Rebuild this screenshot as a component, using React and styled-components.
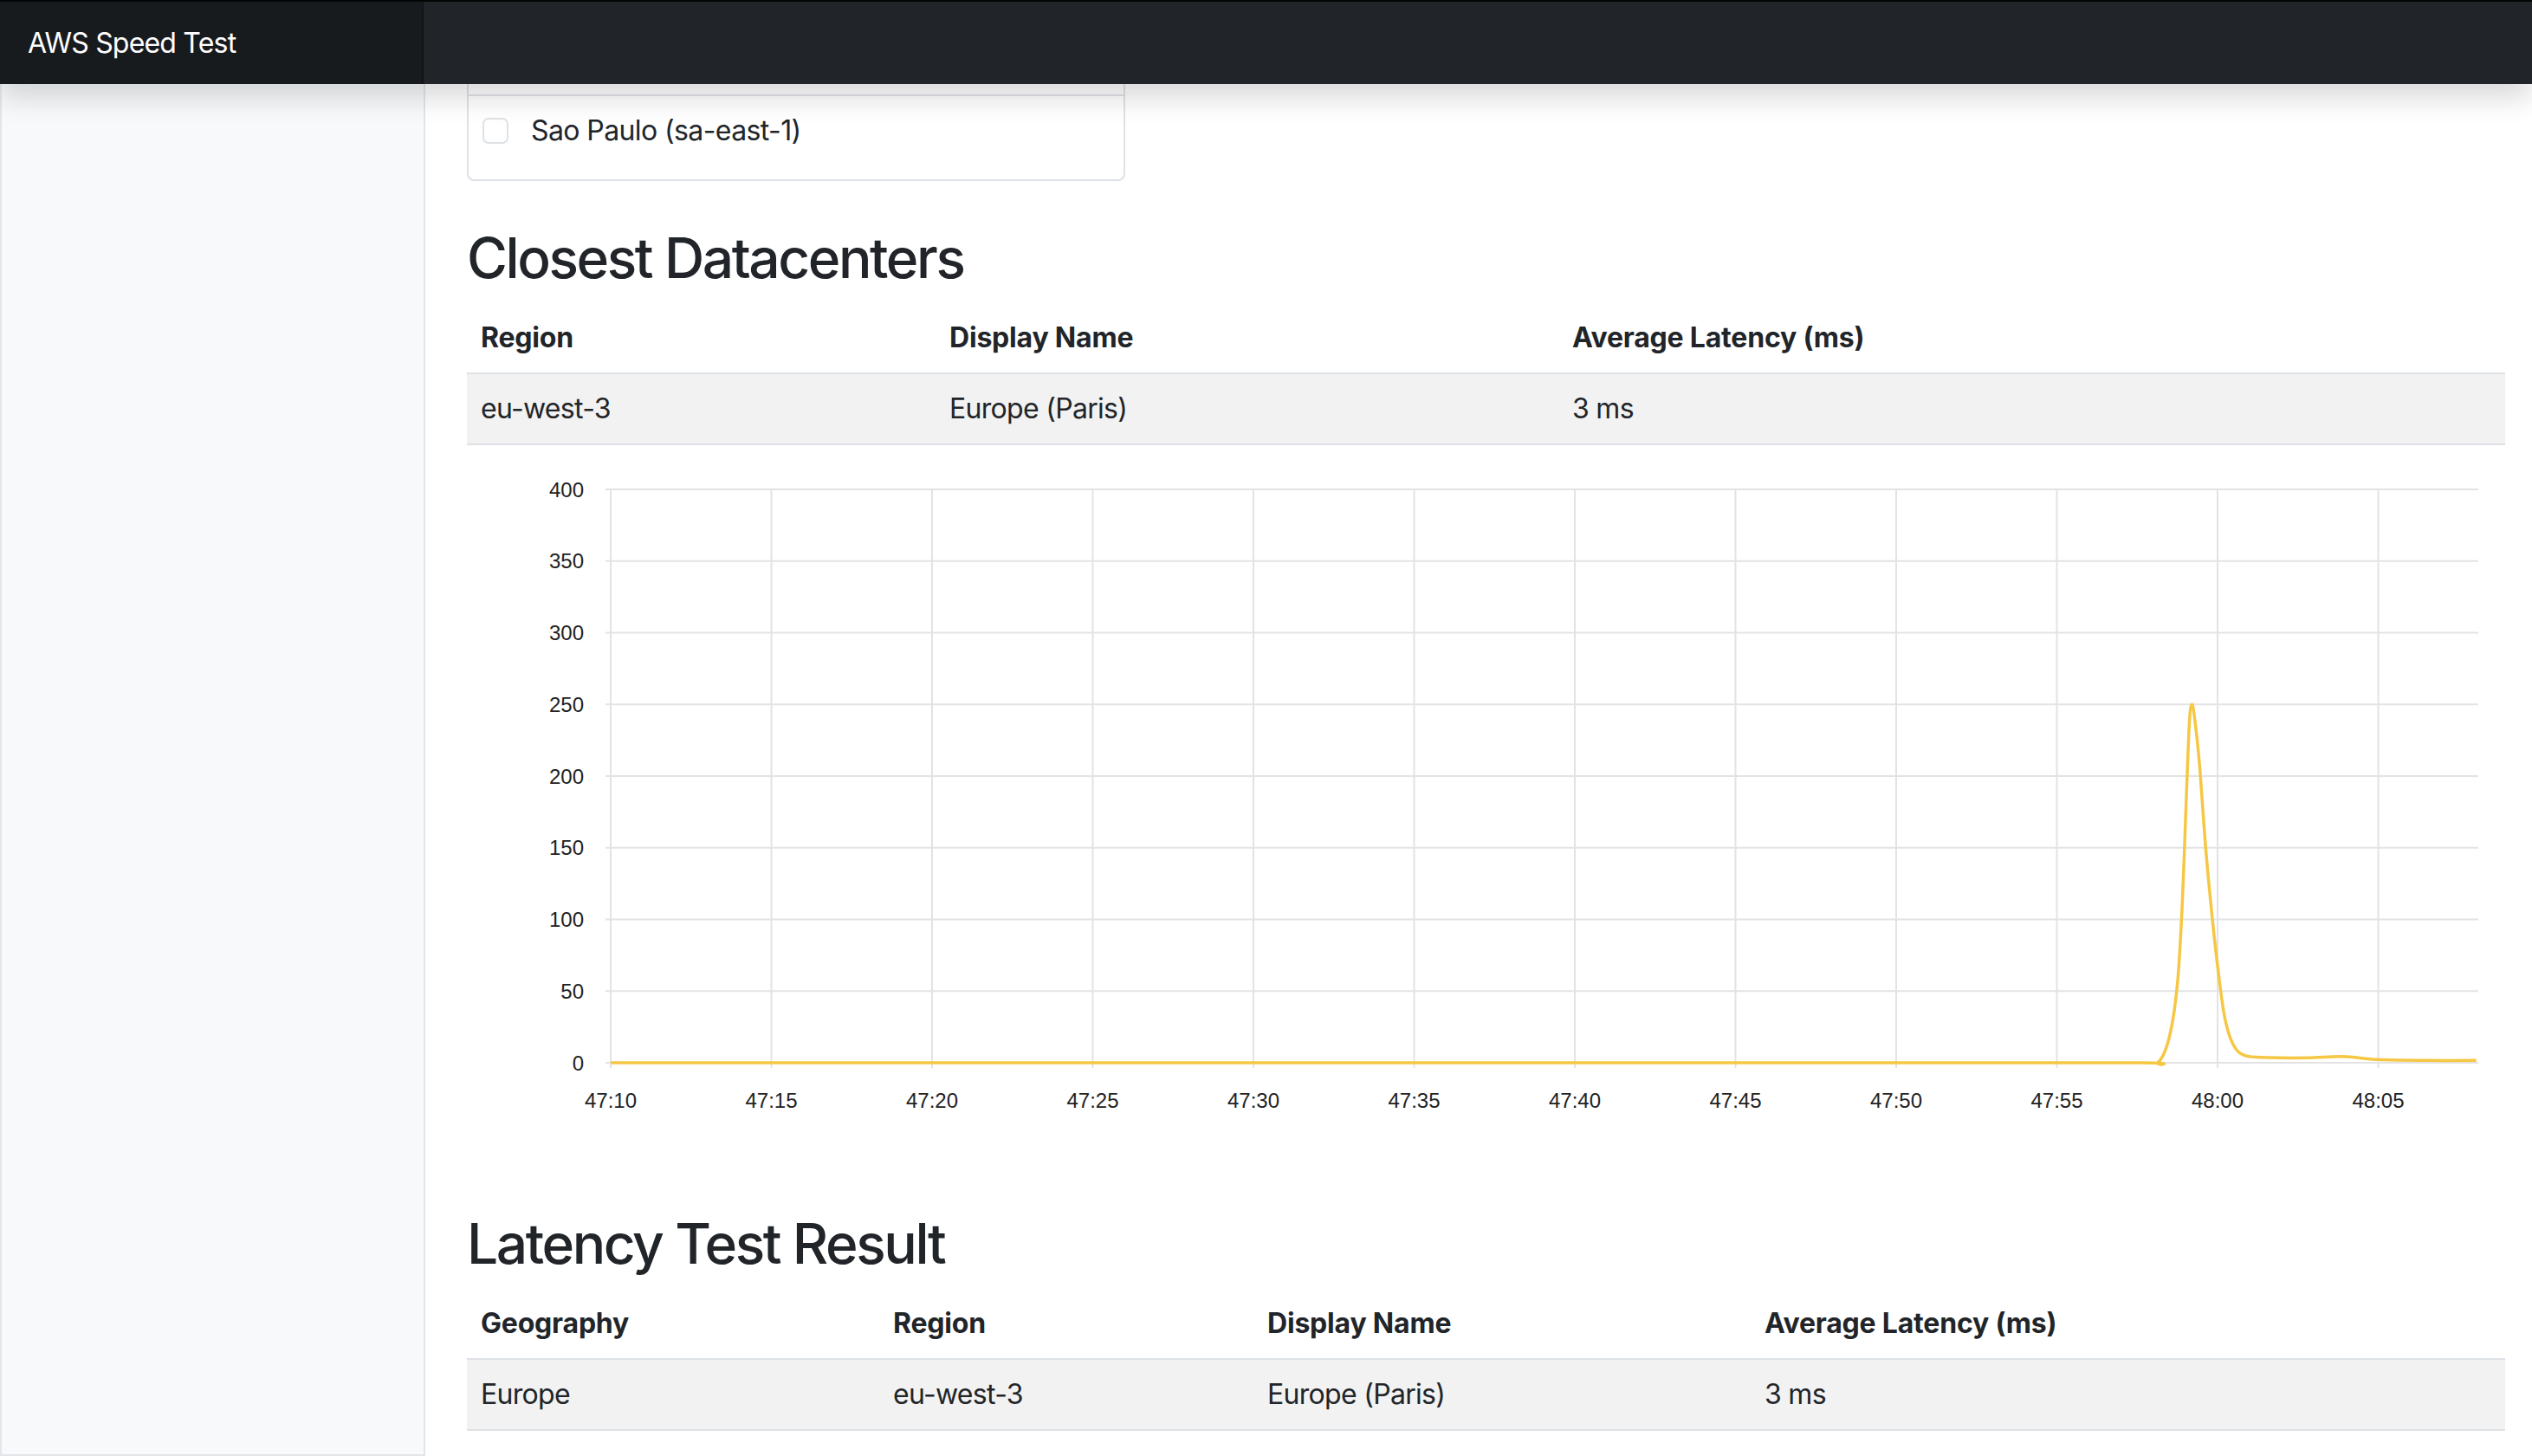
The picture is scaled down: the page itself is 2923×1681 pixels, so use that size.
import React from "react";
import styled, { createGlobalStyle } from "styled-components";

// page is drawn at 2x of the usual bootstrap dashboard sizes
const GlobalStyle = createGlobalStyle`
  * { box-sizing: border-box; }
  body {
    margin: 0;
    font-family: Inter, "Noto Sans", "Liberation Sans", sans-serif;
    color: #212529;
    background: #fff;
  }
`;

const regions = [
  { geography: "Europe", region: "eu-west-3", name: "Europe (Paris)", latency: "3 ms" },
];

// latency samples: seconds since 47:10 and ms
const samples = [
  [0, 0], [20, 0], [40, 0], [47.6, 0], [48.15, 0.3], [48.5, 18], [48.75, 55],
  [48.9, 110], [49.02, 180], [49.12, 236], [49.2, 250], [49.3, 238],
  [49.45, 205], [49.63, 150], [49.84, 100], [50.02, 64], [50.22, 32],
  [50.48, 13], [50.85, 5], [51.6, 3.6], [52.8, 3.4], [53.9, 4.4],
  [55.0, 2.2], [56.5, 1.6], [58.05, 1.6],
];

const PLOT_LEFT = 166;
const PLOT_RIGHT = 2322;
const PLOT_TOP = 21;
const PLOT_BOTTOM = 683;
const X_STEP = 185.5;

const px = (t) => PLOT_LEFT + (t / 5) * X_STEP;
const py = (v) => PLOT_BOTTOM - (v / 400) * (PLOT_BOTTOM - PLOT_TOP);

const smoothPath = (pts) => {
  const p = pts.map(([t, v]) => [px(t), py(v)]);
  let d = `M${p[0][0]},${p[0][1]}`;
  for (let i = 0; i < p.length - 1; i++) {
    const p0 = p[i - 1] || p[i];
    const p1 = p[i];
    const p2 = p[i + 1];
    const p3 = p[i + 2] || p2;
    const c1x = p1[0] + (p2[0] - p0[0]) / 6;
    const c1y = p1[1] + (p2[1] - p0[1]) / 6;
    const c2x = p2[0] - (p3[0] - p1[0]) / 6;
    const c2y = p2[1] - (p3[1] - p1[1]) / 6;
    d += ` C${c1x},${c1y} ${c2x},${c2y} ${p2[0]},${p2[1]}`;
  }
  return d;
};

const xLabels = ["47:10", "47:15", "47:20", "47:25", "47:30", "47:35", "47:40", "47:45", "47:50", "47:55", "48:00", "48:05"];
const yLabels = [400, 350, 300, 250, 200, 150, 100, 50, 0];

const App = () => {
  return (
    <>
      <GlobalStyle />
      <Navbar>
        <Brand>AWS Speed Test</Brand>
      </Navbar>
      <Layout>
        <Sidebar />
        <Main>
          <RegionList>
            <RegionItem>
              <Check type="checkbox" />
              <span>Stockholm (eu-north-1)</span>
            </RegionItem>
            <RegionItem>
              <Check type="checkbox" />
              <span>Sao Paulo (sa-east-1)</span>
            </RegionItem>
          </RegionList>

          <Heading $mt="51px">Closest Datacenters</Heading>
          <Table>
            <colgroup>
              <col style={{ width: 541 }} />
              <col style={{ width: 719 }} />
              <col />
            </colgroup>
            <thead>
              <tr>
                <Th>Region</Th>
                <Th>Display Name</Th>
                <Th>Average Latency (ms)</Th>
              </tr>
            </thead>
            <tbody>
              {regions.map((r) => (
                <Row key={r.region}>
                  <Td>{r.region}</Td>
                  <Td>{r.name}</Td>
                  <Td>{r.latency}</Td>
                </Row>
              ))}
            </tbody>
          </Table>

          <ChartBox>
            <svg width="2352" height="760" viewBox="0 0 2352 760">
              {yLabels.map((v) => (
                <g key={v}>
                  <line x1={PLOT_LEFT - 6} x2={PLOT_RIGHT} y1={py(v)} y2={py(v)} stroke="#e3e3e3" strokeWidth="2" />
                  <AxisText x={PLOT_LEFT - 31} y={py(v)} textAnchor="end" dominantBaseline="central">
                    {v}
                  </AxisText>
                </g>
              ))}
              {xLabels.map((l, i) => (
                <g key={l}>
                  <line x1={PLOT_LEFT + i * X_STEP} x2={PLOT_LEFT + i * X_STEP} y1={PLOT_TOP} y2={PLOT_BOTTOM + 6} stroke="#e3e3e3" strokeWidth="2" />
                  <AxisText x={PLOT_LEFT + i * X_STEP} y={726} textAnchor="middle" dominantBaseline="central">
                    {l}
                  </AxisText>
                </g>
              ))}
              <path d={smoothPath(samples)} fill="none" stroke="#f6c744" strokeWidth="3.5" strokeLinejoin="round" />
            </svg>
          </ChartBox>

          <Heading $mt="94px">Latency Test Result</Heading>
          <Table>
            <colgroup>
              <col style={{ width: 476 }} />
              <col style={{ width: 432 }} />
              <col style={{ width: 574 }} />
              <col />
            </colgroup>
            <thead>
              <tr>
                <Th>Geography</Th>
                <Th>Region</Th>
                <Th>Display Name</Th>
                <Th>Average Latency (ms)</Th>
              </tr>
            </thead>
            <tbody>
              {regions.map((r) => (
                <Row key={r.region}>
                  <Td>{r.geography}</Td>
                  <Td>{r.region}</Td>
                  <Td>{r.name}</Td>
                  <Td>{r.latency}</Td>
                </Row>
              ))}
            </tbody>
          </Table>
        </Main>
      </Layout>
    </>
  );
};

const Navbar = styled.header`
  position: relative;
  z-index: 10;
  display: flex;
  height: 97px;
  background: #212529;
  border-top: 2px solid #050505;
  box-shadow: 0 16px 32px rgba(0, 0, 0, 0.15);
`;

const Brand = styled.div`
  display: flex;
  align-items: center;
  width: 489px;
  padding-left: 32px;
  background: rgba(0, 0, 0, 0.25);
  box-shadow: inset -2px 0 0 rgba(0, 0, 0, 0.25);
  color: #fff;
  font-size: 32px;
  line-height: 48px;
  letter-spacing: -0.8px;
`;

const Layout = styled.div`
  display: flex;
  align-items: flex-start;
`;

const Sidebar = styled.nav`
  flex-shrink: 0;
  width: 491px;
  height: calc(100vh - 97px);
  background: #f8f9fa;
  border: 2px solid #e2e5e9;
  border-top: none;
`;

const Main = styled.main`
  flex: 1;
  min-width: 0;
  padding: 0 31px 0 48px;
`;

const RegionList = styled.ul`
  list-style: none;
  width: 760px;
  margin: -87px 0 0;
  padding: 0 0 16px;
  border: 2px solid #dee2e6;
  border-radius: 8px;
  font-size: 32px;
  line-height: 48px;
  letter-spacing: -0.6px;
`;

const RegionItem = styled.li`
  display: flex;
  align-items: center;
  gap: 26px;
  padding: 16px 16px;
  min-height: 80px;
  &:first-child {
    height: 97px;
  }
  & + & {
    border-top: 2px solid #dee2e6;
  }
`;

const Check = styled.input`
  appearance: none;
  flex-shrink: 0;
  width: 30px;
  height: 30px;
  margin: 0;
  border: 2px solid #dee2e6;
  border-radius: 7px;
  background: #fff;
`;

const Heading = styled.h2`
  margin: ${(p) => p.$mt} 0 13px;
  font-size: 64px;
  font-weight: 500;
  line-height: 1.2;
  letter-spacing: -2.4px;
  color: #212529;
`;

const Table = styled.table`
  width: 100%;
  border-collapse: collapse;
  table-layout: fixed;
  font-size: 32px;
  line-height: 48px;
  color: #212529;
`;

const Th = styled.th`
  padding: 16px;
  text-align: left;
  font-weight: 700;
  letter-spacing: -0.2px;
  border-bottom: 2px solid #dee2e6;
`;

const Row = styled.tr`
  background: #f2f2f2;
`;

const Td = styled.td`
  padding: 16px;
  letter-spacing: -0.7px;
  border-bottom: 2px solid #dee2e6;
`;

const ChartBox = styled.div`
  margin-top: 30px;
  height: 760px;
  svg {
    display: block;
  }
`;

const AxisText = styled.text`
  font-family: "Liberation Sans", Arial, sans-serif;
  font-size: 24px;
  fill: #222;
`;

export default App;
